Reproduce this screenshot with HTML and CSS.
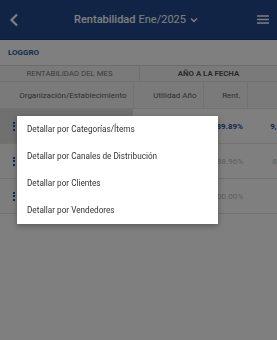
FILE: index.html
```html
<!DOCTYPE html>
<html lang="es">
<head>
    <meta charset="UTF-8">
    <meta name="viewport" content="width=device-width, initial-scale=1.0">
    <title>Rentabilidad</title>
    <link rel="stylesheet" href="styles.css">
</head>
<body>
    <div class="topbar">
        <span class="back">
            <svg width="10" height="14" viewBox="0 0 10 14"><path d="M8 1.5 L2.5 7 L8 12.5" fill="none" stroke="#fff" stroke-width="2.2"/></svg>
        </span>
        <div class="title">
            <b>Rentabilidad</b> Ene/2025
            <svg width="8" height="6" viewBox="0 0 8 6"><path d="M1 1.5 L4 4.5 L7 1.5" fill="none" stroke="#fff" stroke-width="1.4"/></svg>
        </div>
        <span class="burger">
            <svg width="12" height="9" viewBox="0 0 12 9"><path d="M0 1h12M0 4.5h12M0 8h12" stroke="#fff" stroke-width="1.5"/></svg>
        </span>
    </div>

    <div class="company">LOGGRO</div>

    <div class="groups">
        <div class="group">RENTABILIDAD DEL MES</div>
        <div class="group strong">AÑO A LA FECHA</div>
    </div>

    <div class="table-wrap">
        <table class="grid">
            <colgroup>
                <col class="c1"><col class="c2"><col class="c3"><col class="c4">
            </colgroup>
            <thead>
                <tr>
                    <th>Organización/Establecimiento</th>
                    <th>Utilidad Año</th>
                    <th>Rent.</th>
                    <th>Ventas Año</th>
                </tr>
            </thead>
            <tbody>
                <tr class="active">
                    <td class="org"><span class="dots"><i></i><i></i><i></i></span></td>
                    <td></td>
                    <td class="bold">89.89%</td>
                    <td class="bold">9,548,230,115</td>
                </tr>
                <tr>
                    <td class="org"><span class="dots"><i></i><i></i><i></i></span></td>
                    <td></td>
                    <td>88.96%</td>
                    <td>8,712,604,300</td>
                </tr>
                <tr>
                    <td class="org"><span class="dots"><i></i><i></i><i></i></span></td>
                    <td></td>
                    <td>100.00%</td>
                    <td>835,310,000</td>
                </tr>
            </tbody>
        </table>
    </div>

    <div class="overlay"></div>

    <div class="menu">
        <div class="menu-item">Detallar por Categorías/Ítems</div>
        <div class="menu-item">Detallar por Canales de Distribución</div>
        <div class="menu-item">Detallar por Clientes</div>
        <div class="menu-item">Detallar por Vendedores</div>
    </div>
</body>
</html>
```

FILE: styles.css
```css
body {
    margin: 0;
    background: #fff;
    font-family: Roboto, "Noto Sans", Arial, sans-serif;
    overflow: hidden;
    height: 340px;
}
.topbar {
    height: 39px;
    background: #22498a;
    color: #fff;
    display: flex;
    align-items: center;
    justify-content: space-between;
    padding: 0 8px 0 9px;
    border-bottom: 1px solid #1b3a70;
}
.back {
    display: flex;
    width: 12px;
}
.title {
    font-size: 11px;
    display: flex;
    align-items: center;
    gap: 3px;
    margin-right: 6px;
}
.title b {
    font-weight: 500;
}
.title svg {
    margin-left: 1px;
}
.burger {
    display: flex;
    width: 12px;
}
.company {
    height: 25px;
    line-height: 25px;
    padding-left: 8px;
    font-size: 8px;
    font-weight: 700;
    color: #2c5499;
    border-bottom: 1px solid #d8d8d8;
}
.groups {
    display: flex;
    height: 15px;
    border-bottom: 1px solid #e0e0e0;
}
.group {
    width: 139px;
    text-align: center;
    font-size: 7.8px;
    line-height: 15px;
    color: #7a7a7a;
    background: #f4f4f4;
    border-right: 1px solid #e0e0e0;
}
.group.strong {
    flex: 1;
    font-weight: 700;
    color: #555;
    border-right: 0;
}
.table-wrap {
    overflow: hidden;
}
.grid {
    border-collapse: collapse;
    table-layout: fixed;
    width: 326px;
}
.c1 { width: 133px; }
.c2 { width: 70px; }
.c3 { width: 44px; }
.c4 { width: 79px; }
.grid th {
    height: 26px;
    font-size: 8px;
    font-weight: 400;
    color: #5f5f5f;
    background: #f4f4f4;
    text-align: right;
    padding: 0 6px 0 0;
    border-right: 1px solid #e4e4e4;
    border-bottom: 1px solid #e4e4e4;
    white-space: nowrap;
    overflow: hidden;
}
.grid td {
    height: 34px;
    font-size: 8px;
    color: #bdbdbd;
    text-align: right;
    padding: 0 4px 0 0;
    border-bottom: 1px solid #e4e4e4;
    white-space: nowrap;
    overflow: hidden;
}
.grid td.org {
    background: #fafafa;
    text-align: left;
    padding-left: 13px;
}
.grid tr.active td.org {
    background: #e0e0e0;
}
.grid td.bold {
    font-weight: 700;
    color: #2c5499;
}
.dots {
    display: inline-flex;
    flex-direction: column;
    gap: 1.5px;
    vertical-align: middle;
}
.dots i {
    width: 2px;
    height: 2px;
    background: #2c5499;
    display: block;
}
.overlay {
    position: fixed;
    inset: 0;
    background: rgba(0, 0, 0, 0.5);
}
.menu {
    position: absolute;
    left: 17px;
    top: 116px;
    width: 201px;
    background: #fff;
    box-shadow: 0 2px 6px rgba(0, 0, 0, 0.3);
}
.menu-item {
    height: 27px;
    line-height: 27px;
    padding-left: 10px;
    font-size: 8.2px;
    color: #333;
}
```
